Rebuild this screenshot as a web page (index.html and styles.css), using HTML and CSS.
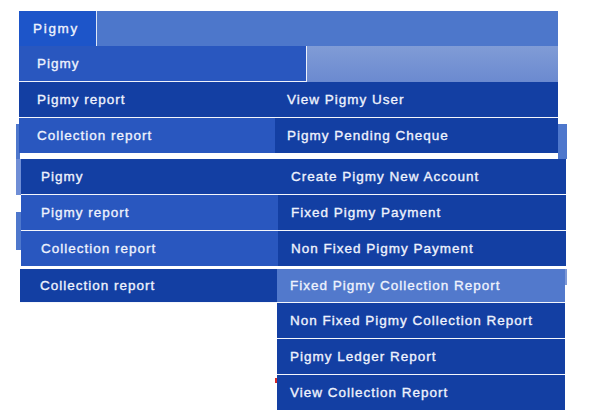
FILE: index.html
```html
<!DOCTYPE html>
<html>
<head>
<meta charset="utf-8">
<link rel="stylesheet" href="styles.css">
</head>
<body>
<div class="page">
  <span class="ghost ghost-l1"></span>
  <span class="ghost ghost-l2"></span>
  <span class="ghost ghost-l3"></span>
  <span class="ghost ghost-r1"></span>
  <span class="ghost ghost-r2"></span>
  <span class="ghost ghost-mark"></span>

  <div class="menu menu-top">
    <div class="bar">
      <div class="tab">Pigmy</div>
      <div class="bar-fill"></div>
    </div>
    <div class="sub-head">
      <div class="sub-head-cell">Pigmy</div>
      <div class="sub-head-fill"></div>
    </div>
    <div class="row row-a line">
      <div class="cell dark">Pigmy report</div>
      <div class="cell dark right">View Pigmy User</div>
    </div>
    <div class="row row-a">
      <div class="cell mid">Collection report</div>
      <div class="cell dark right">Pigmy Pending Cheque</div>
    </div>
  </div>

  <div class="menu menu-second">
    <div class="row row-b line">
      <div class="cell dark">Pigmy</div>
      <div class="cell dark right">Create Pigmy New Account</div>
    </div>
    <div class="row row-b line">
      <div class="cell mid">Pigmy report</div>
      <div class="cell dark right">Fixed Pigmy Payment</div>
    </div>
    <div class="row row-b">
      <div class="cell mid">Collection report</div>
      <div class="cell dark right">Non Fixed Pigmy Payment</div>
    </div>
  </div>

  <div class="menu menu-third">
    <div class="row row-c line">
      <div class="cell dark">Collection report</div>
      <div class="cell light right">Fixed Pigmy Collection Report</div>
    </div>
    <div class="stack">
      <div class="stack-item line">Non Fixed Pigmy Collection Report</div>
      <div class="stack-item line">Pigmy Ledger Report</div>
      <div class="stack-item">View Collection Report</div>
    </div>
  </div>
</div>
</body>
</html>
```

FILE: styles.css
```css
html, body {
  margin: 0;
  padding: 0;
  background: #ffffff;
}

.page {
  position: relative;
  width: 600px;
  height: 412px;
  overflow: hidden;
  padding-top: 11px;
  box-sizing: border-box;
  font-family: "Liberation Sans", Arial, sans-serif;
  font-size: 13.5px;
  letter-spacing: 1px;
  color: #eef2fd;
  -webkit-text-stroke: 0.35px #eef2fd;
}

/* ghost slivers of menus stacked underneath */
.ghost {
  position: absolute;
  display: block;
}
.ghost-l1 { left: 16px; top: 124px; width: 4px; height: 36px; background: #4e77cc; }
.ghost-l2 { left: 16px; top: 159px; width: 6px; height: 36px; background: #6f8ed6; }
.ghost-l3 { left: 16px; top: 212px; width: 6px; height: 38px; background: #4e77cc; }
.ghost-r1 { left: 558px; top: 124px; width: 9px; height: 35px; background: #4e77cc; }
.ghost-r2 { left: 565px; top: 269px; width: 2px; height: 16px; background: #7d98d6; }
.ghost-mark { left: 275px; top: 378px; width: 3px; height: 5px; background: #d42a2a; }

.menu {
  position: relative;
}

.menu-top {
  margin-left: 19px;
  width: 539px;
}

.bar {
  display: flex;
  height: 35px;
  background: #4d77cb;
}
.tab {
  width: 78px;
  border-right: 1px solid #dfe7f7;
  background: #1d55c9;
  padding-left: 14px;
  letter-spacing: 1.7px;
  box-sizing: border-box;
  display: flex;
  align-items: center;
}
.bar-fill {
  flex: 1;
}

.sub-head {
  display: flex;
  height: 36px;
}
.sub-head-cell {
  width: 288px;
  box-sizing: border-box;
  background: #2957bf;
  border-right: 1px solid #eef2fb;
  border-bottom: 1px solid #eef2fb;
  padding-left: 18px;
  display: flex;
  align-items: center;
}
.sub-head-fill {
  flex: 1;
  background: linear-gradient(#809cd6, #6b8ad0);
}

.row {
  display: grid;
  height: 35px;
}
.row.line {
  height: 36px;
  border-bottom: 1px solid #f4f6fc;
  box-sizing: border-box;
}
.row-a {
  grid-template-columns: 256px 1fr;
}
.row-a .cell { padding-left: 18px; }
.row-a .cell.right { padding-left: 12px; }

.cell {
  display: flex;
  align-items: center;
  box-sizing: border-box;
  white-space: nowrap;
}
.dark { background: #133fa3; }
.mid { background: #2957bf; }
.light { background: #5279cc; }

.menu-second {
  margin-top: 6px;
  margin-left: 21px;
  width: 545px;
}
.row-b {
  grid-template-columns: 257px 1fr;
}
.row-b .cell { padding-left: 20px; }
.row-b .cell.right { padding-left: 13px; }

.menu-third {
  margin-top: 3px;
  margin-left: 20px;
  width: 545px;
}
.row-c {
  grid-template-columns: 257px 1fr;
}
.row-c.line { height: 34px; }
.row-c .cell { padding-left: 20px; }
.row-c .cell.right { padding-left: 13px; }

.stack {
  margin-left: 257px;
  width: 288px;
}
.stack-item {
  height: 35px;
  background: #133fa3;
  padding-left: 13px;
  display: flex;
  align-items: center;
  box-sizing: border-box;
  white-space: nowrap;
}
.stack-item.line {
  height: 36px;
  border-bottom: 1px solid #f4f6fc;
}
```
